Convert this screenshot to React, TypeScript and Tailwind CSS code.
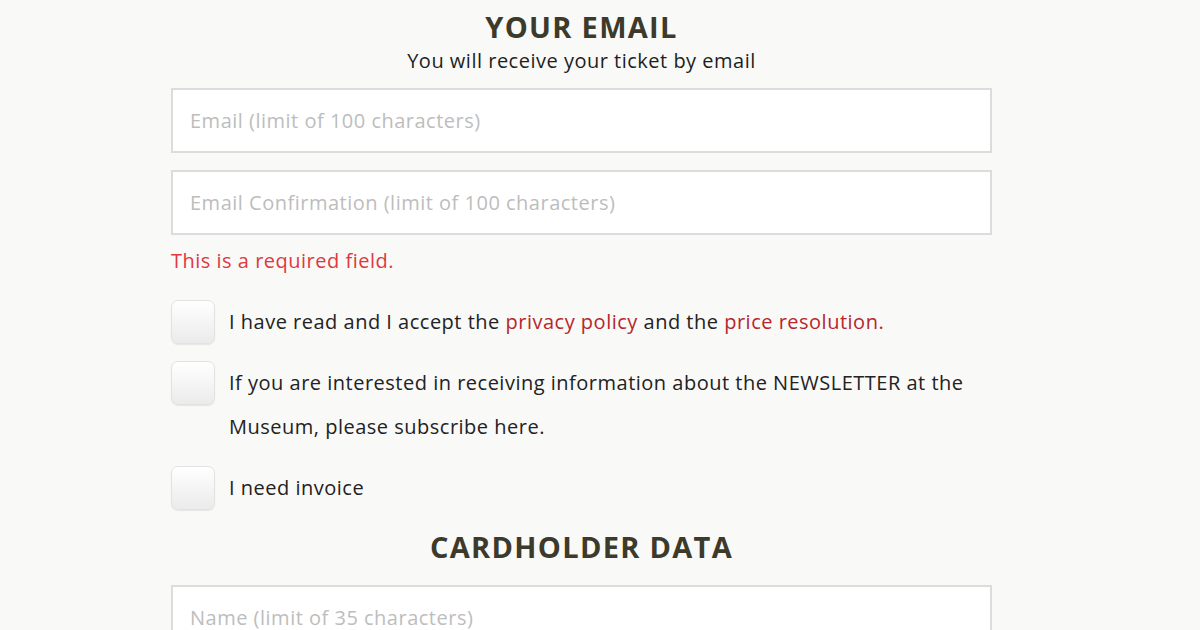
import React from 'react'

function Checkbox() {
  return (
    <span className="block w-[44px] h-[44px] shrink-0 rounded-[7px] border border-[#e2e2e2] bg-gradient-to-b from-white to-[#ebebeb] shadow-[0_1px_1px_rgba(0,0,0,0.08)]" />
  )
}

function TextInput({ placeholder }: { placeholder: string }) {
  return (
    <input
      type="text"
      placeholder={placeholder}
      className="block w-full h-[65px] px-[17px] bg-white border-2 border-[#dcdcdc] text-[20px] tracking-[0.5px] text-[#333] placeholder:text-[#bdbdbd] outline-none"
    />
  )
}

export default function App() {
  return (
    <div className="min-h-[630px] bg-[#f9f9f8] font-['Open_Sans',sans-serif] text-[#222] text-[20px] tracking-[0.5px]">
      <div className="w-[821px] ml-[171px] pt-[7px]">
        <h2 className="text-center text-[29px] leading-[40px] font-bold text-[#3b3a2b] tracking-[1.3px]">YOUR EMAIL</h2>
        <p className="text-center leading-[27px] text-[#1e1e1e]">You will receive your ticket by email</p>

        <div className="mt-[14px] flex flex-col gap-[17px]">
          <TextInput placeholder="Email (limit of 100 characters)" />
          <TextInput placeholder="Email Confirmation (limit of 100 characters)" />
        </div>
        <p className="mt-[14px] leading-[24px] text-[#e0383e]">This is a required field.</p>

        <div className="mt-[27px] flex flex-col gap-[17px]">
          <label className="flex gap-[14px] leading-[44px]">
            <Checkbox />
            <span>
              I have read and I accept the <a className="text-[#b5272d]">privacy policy</a> and the{' '}
              <a className="text-[#b5272d]">price resolution.</a>
            </span>
          </label>
          <label className="flex gap-[14px] leading-[44px]">
            <Checkbox />
            <span>If you are interested in receiving information about the NEWSLETTER at the Museum, please subscribe here.</span>
          </label>
          <label className="flex gap-[14px] leading-[44px]">
            <Checkbox />
            <span>I need invoice</span>
          </label>
        </div>

        <h2 className="mt-[20px] text-center text-[29px] leading-[34px] font-bold text-[#3b3a2b] tracking-[1.3px]">CARDHOLDER DATA</h2>
        <div className="mt-[21px]">
          <TextInput placeholder="Name (limit of 35 characters)" />
        </div>
      </div>
    </div>
  )
}
